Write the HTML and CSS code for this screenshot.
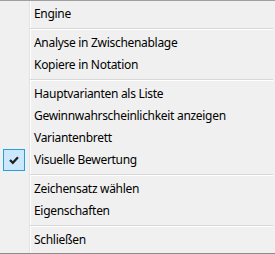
FILE: index.html
```html
<!DOCTYPE html>
<html>
<head>
<meta charset="utf-8">
<link rel="stylesheet" href="styles.css">
</head>
<body>
<div class="menu">
  <div class="item"><span class="gutter"></span><span class="label">Engine</span></div>
  <div class="sep"></div>
  <div class="item"><span class="gutter"></span><span class="label">Analyse in Zwischenablage</span></div>
  <div class="item"><span class="gutter"></span><span class="label">Kopiere in Notation</span></div>
  <div class="sep"></div>
  <div class="item"><span class="gutter"></span><span class="label">Hauptvarianten als Liste</span></div>
  <div class="item"><span class="gutter"></span><span class="label">Gewinnwahrscheinlichkeit anzeigen</span></div>
  <div class="item"><span class="gutter"></span><span class="label">Variantenbrett</span></div>
  <div class="item"><span class="gutter"><span class="check"><svg width="12" height="10" viewBox="0 0 12 10"><path d="M2 5 L4.8 7.8 L10 2.2" fill="none" stroke="#222" stroke-width="2.2"/></svg></span></span><span class="label">Visuelle Bewertung</span></div>
  <div class="sep"></div>
  <div class="item"><span class="gutter"></span><span class="label">Zeichensatz wählen</span></div>
  <div class="item"><span class="gutter"></span><span class="label">Eigenschaften</span></div>
  <div class="sep"></div>
  <div class="item"><span class="gutter"></span><span class="label">Schließen</span></div>
</div>
</body>
</html>
```
FILE: styles.css
```css
* { box-sizing: border-box; }
html, body { margin: 0; padding: 0; background: #f0f0f0; }
.menu {
  width: 275px;
  height: 254px;
  background: #f0f0f0 linear-gradient(to right, transparent 29px, #e2e2e2 29px, #e2e2e2 30px, #ffffff 30px, #ffffff 31px, transparent 31px);
  border-top: 1px solid #a0a0a0;
  border-bottom: 1px solid #8c8c8c;
  padding: 2px 0 2px 0;
  font-family: "Noto Sans", "Open Sans", sans-serif;
  font-size: 12px;
  letter-spacing: -0.3px;
  color: #000;
  display: flex;
  flex-direction: column;
}
.item {
  height: 22px;
  display: flex;
  align-items: center;
}
.gutter {
  width: 34px;
  height: 22px;
  flex: none;
  display: flex;
  align-items: center;
  padding-left: 3px;
}
.label {
  white-space: nowrap;
  line-height: 22px;
}
.check {
  width: 22px;
  height: 22px;
  background: #cce8ff;
  border: 1px solid #26a0da;
  display: flex;
  align-items: center;
  justify-content: center;
}
.sep {
  height: 7px;
  margin-left: 30px;
  margin-right: 2px;
  padding-top: 3px;
}
.sep::before {
  content: "";
  display: block;
  height: 1px;
  background: #d7d7d7;
  border-bottom: 1px solid #ffffff;
  box-sizing: content-box;
}
```
